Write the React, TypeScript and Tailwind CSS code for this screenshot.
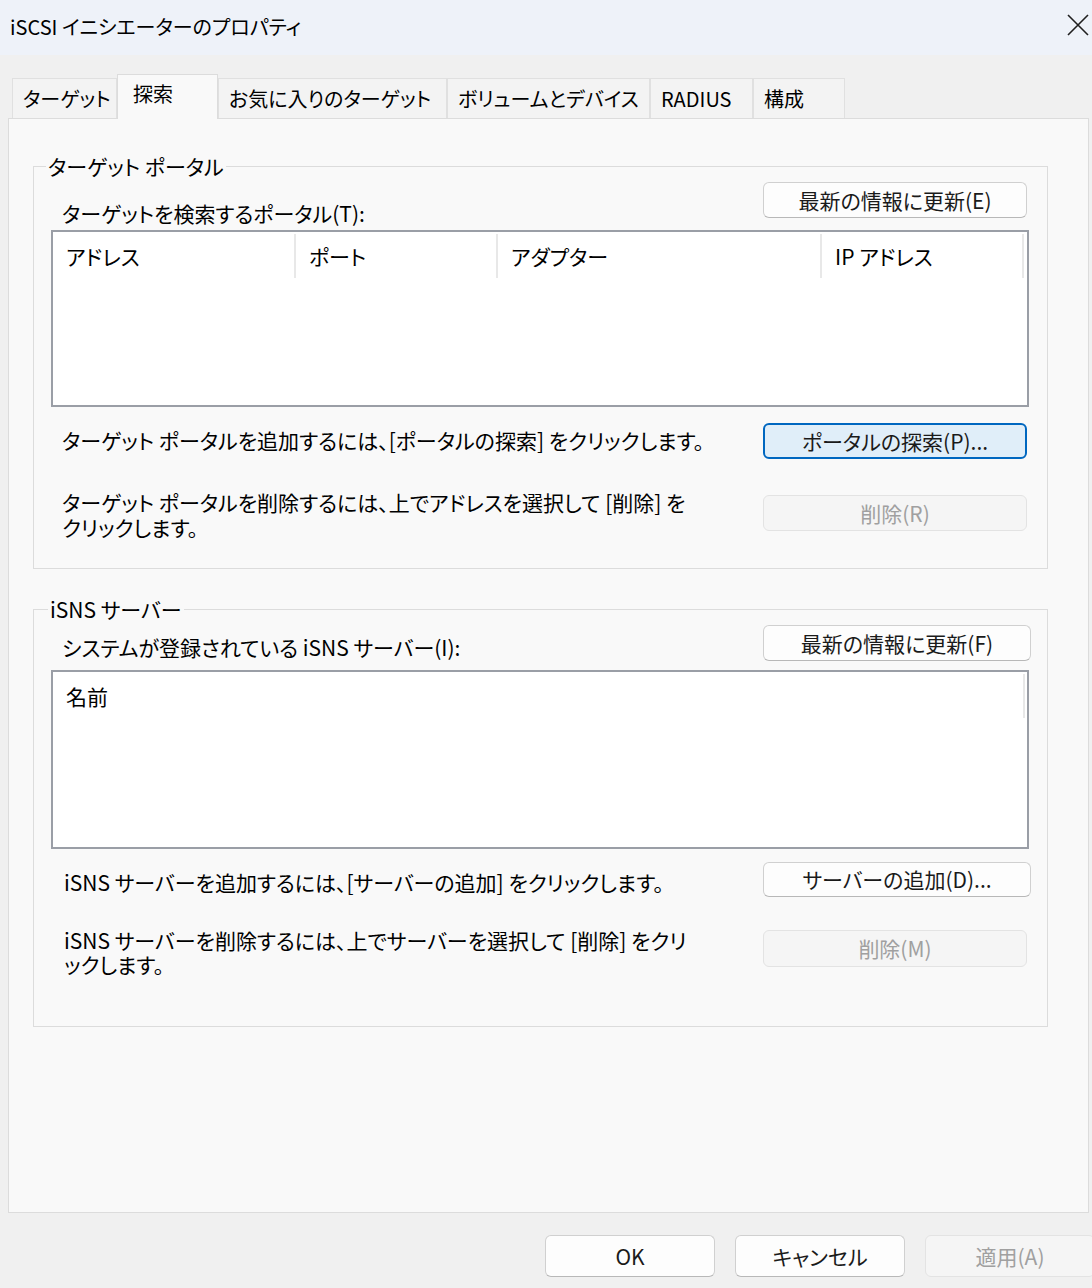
const tabs = [
  { label: 'ターゲット', w: 'w-[105px]' },
  { label: '探索', w: 'w-[101px]', active: true },
  { label: 'お気に入りのターゲット', w: 'w-[229px]' },
  { label: 'ボリュームとデバイス', w: 'w-[203px]' },
  { label: 'RADIUS', w: 'w-[103px]' },
  { label: '構成', w: 'w-[92px]' },
]

function Btn({
  children,
  className = '',
  focused = false,
  disabled = false,
}: {
  children: React.ReactNode
  className?: string
  focused?: boolean
  disabled?: boolean
}) {
  let look = 'bg-[#fdfdfd] border border-[#d0d0d0] border-b-[#b8b8b8] text-[#1a1a1a]'
  if (focused) look = 'bg-[#e0eef9] border-2 border-[#0067c0] text-[#1a1a1a]'
  if (disabled) look = 'bg-[#f5f5f5] border border-[#e3e3e3] text-[#a0a0a0]'
  return (
    <div className={`flex items-center justify-center rounded-[6px] shrink-0 ${look} ${className}`}>
      {children}
    </div>
  )
}

function Header({ cols }: { cols: { label: string; w: string }[] }) {
  return (
    <div className="flex h-[48px] items-center">
      {cols.map((c) => (
        <div key={c.label} className={`${c.w} h-[44px] flex items-center pl-[13px] border-r-2 border-[#e8e8e8] shrink-0`}>
          {c.label}
        </div>
      ))}
    </div>
  )
}

export default function App() {
  return (
    <div className="w-[1092px] h-[1288px] overflow-hidden bg-[#f0f0f0] text-[#000] text-[21px] leading-[25px] font-['Noto_Sans_CJK_JP','Noto_Sans',sans-serif] [font-feature-settings:'palt']">
      {/* title bar */}
      <div className="h-[55px] bg-[#eef2f9] flex items-center justify-between pl-[10px] pr-[2px]">
        <span className="text-[20px] -mt-[2px]">iSCSI イニシエーターのプロパティ</span>
        <svg width="24" height="24" viewBox="0 0 24 24" className="-mt-[6px]" fill="none" stroke="#1f1f1f" strokeWidth="1.6">
          <path d="M2 2 L22 22 M22 2 L2 22" />
        </svg>
      </div>

      {/* tabs */}
      <div className="flex items-end pl-[12px] h-[63px] text-[20px]">
        {tabs.map((t) =>
          t.active ? (
            <div
              key={t.label}
              className={`${t.w} h-[45px] -mb-px relative z-10 bg-[#f9f9f9] border border-b-0 border-[#dcdcdc] pl-[15px] pt-[6px] shrink-0`}
            >
              {t.label}
            </div>
          ) : (
            <div
              key={t.label}
              className={`${t.w} h-[40px] bg-[#f3f3f3] border border-b-0 border-[#e0e0e0] pl-[10px] pt-[7px] shrink-0`}
            >
              {t.label}
            </div>
          ),
        )}
      </div>

      {/* panel */}
      <div className="ml-[8px] w-[1081px] h-[1095px] bg-[#f9f9f9] border border-[#dcdcdc] pt-[35px] pl-[24px]">
        {/* target portal */}
        <fieldset className="w-[1015px] h-[415px] border border-[#dcdcdc] pl-[17px] pr-[18px]">
          <legend className="-ml-[5px] px-[2px]">ターゲット ポータル</legend>
          <div className="flex items-end justify-between h-[51px]">
            <span className="pl-[11px] mb-[4px]">ターゲットを検索するポータル(T):</span>
            <Btn className="w-[264px] h-[36px] mb-[12px] mr-[2px]">最新の情報に更新(E)</Btn>
          </div>
          <div className="h-[177px] bg-white border-2 border-[#9a9ea6]">
            <Header
              cols={[
                { label: 'アドレス', w: 'w-[243px]' },
                { label: 'ポート', w: 'w-[202px]' },
                { label: 'アダプター', w: 'w-[324px]' },
                { label: 'IP アドレス', w: 'w-[202px]' },
              ]}
            />
          </div>
          <div className="flex items-start justify-between">
            <span className="pl-[11px] mt-[21px]">ターゲット ポータルを追加するには、[ポータルの探索] をクリックします。</span>
            <Btn focused className="w-[264px] h-[36px] mt-[16px] mr-[2px]">ポータルの探索(P)...</Btn>
          </div>
          <div className="flex items-start justify-between">
            <div className="pl-[11px] mt-[31px] whitespace-nowrap">
              <div className="h-[25px]">ターゲット ポータルを削除するには、上でアドレスを選択して [削除] を</div>
              <div className="h-[25px]">クリックします。</div>
            </div>
            <Btn disabled className="w-[264px] h-[36px] mt-[36px] mr-[2px]">削除(R)</Btn>
          </div>
        </fieldset>

        {/* iSNS server */}
        <fieldset className="mt-[28px] w-[1015px] h-[430px] border border-[#dcdcdc] pl-[17px] pr-[18px]">
          <legend className="-ml-[3px] px-[2px]">iSNS サーバー</legend>
          <div className="flex items-end justify-between h-[48px]">
            <span className="pl-[11px] mb-[10px]">システムが登録されている iSNS サーバー(I):</span>
            <Btn className="w-[268px] h-[36px] mb-[9px] -mr-[2px]">最新の情報に更新(F)</Btn>
          </div>
          <div className="h-[179px] bg-white border-2 border-[#9a9ea6]">
            <Header cols={[{ label: '名前', w: 'w-[972px]' }]} />
          </div>
          <div className="flex items-start justify-between">
            <span className="pl-[13px] mt-[21px]">iSNS サーバーを追加するには、[サーバーの追加] をクリックします。</span>
            <Btn className="w-[268px] h-[35px] mt-[13px] -mr-[2px]">サーバーの追加(D)...</Btn>
          </div>
          <div className="flex items-start justify-between">
            <div className="pl-[13px] mt-[31px] leading-[24px] whitespace-nowrap">
              <div className="h-[24px]">iSNS サーバーを削除するには、上でサーバーを選択して [削除] をクリ</div>
              <div className="h-[24px]">ックします。</div>
            </div>
            <Btn disabled className="w-[264px] h-[37px] mt-[33px] mr-[2px]">削除(M)</Btn>
          </div>
        </fieldset>
      </div>

      {/* bottom buttons */}
      <div className="flex justify-end gap-[20px] pt-[22px] -mr-[3px]">
        <Btn className="w-[170px] h-[42px]">OK</Btn>
        <Btn className="w-[170px] h-[42px]">キャンセル</Btn>
        <Btn disabled className="w-[170px] h-[42px]">適用(A)</Btn>
      </div>
    </div>
  )
}
